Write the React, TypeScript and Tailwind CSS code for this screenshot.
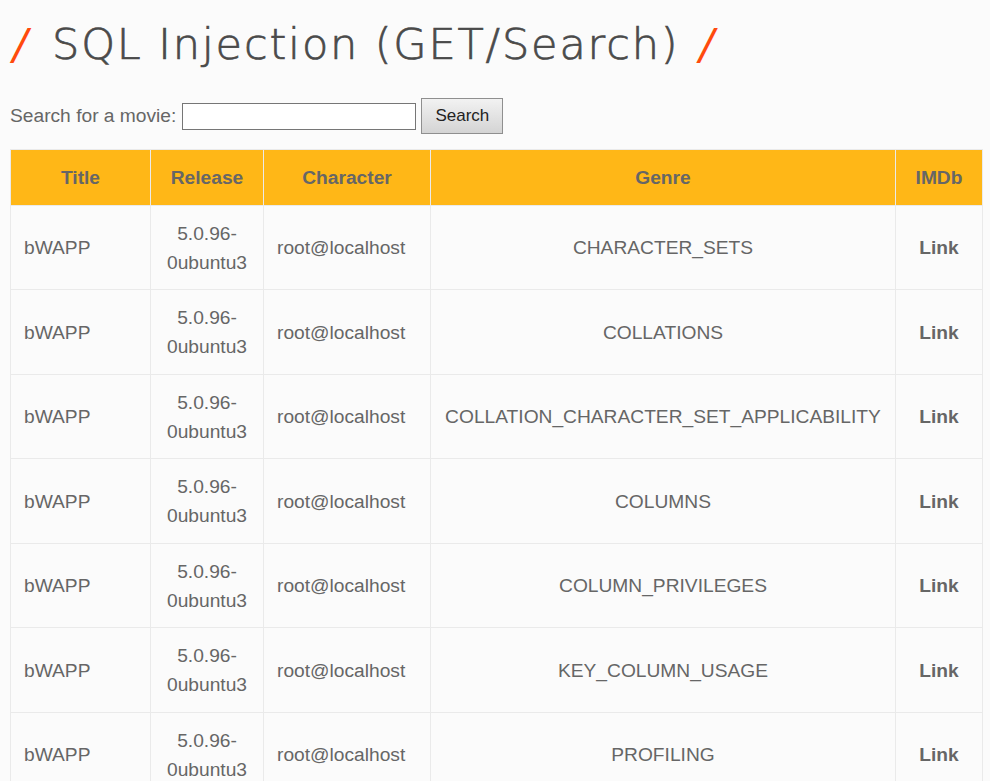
const rows = [
  'CHARACTER_SETS',
  'COLLATIONS',
  'COLLATION_CHARACTER_SET_APPLICABILITY',
  'COLUMNS',
  'COLUMN_PRIVILEGES',
  'KEY_COLUMN_USAGE',
  'PROFILING',
  'ROUTINES',
];

const headers = ['Title', 'Release', 'Character', 'Genre', 'IMDb'];

export default function App() {
  return (
    <div className="h-[781px] overflow-hidden bg-[#fbfbfb] pl-[10px] font-['Liberation_Sans',Arial,sans-serif] text-[19.2px] leading-[28.75px] text-[#666666]">
      <h1 className="flex h-[87px] items-center pt-[2px] font-['DejaVu_Sans',sans-serif] text-[43px] font-extralight leading-none tracking-[1.85px] text-[#4a4a4a] [-webkit-text-stroke:0.7px_#4a4a4a]">
        <span className="ml-[3px] w-[39px] font-normal italic text-[#ff4a0d] [-webkit-text-stroke:0]">/</span>
        <span>SQL Injection (GET/Search)</span>
        <span className="ml-[20px] font-normal italic text-[#ff4a0d] [-webkit-text-stroke:0]">/</span>
      </h1>

      <form className="mt-[11px] flex h-[36px] items-center">
        <label htmlFor="title">Search for a movie:</label>
        <input
          id="title"
          type="text"
          className="ml-[6px] h-[27px] w-[234px] border border-[#767676] bg-white"
        />
        <button
          type="button"
          className="ml-[5px] h-[36px] w-[82px] border border-[#8f8f8f] bg-linear-to-b from-[#f2f2f2] to-[#d4d4d4] text-[17px] text-[#222222]"
        >
          Search
        </button>
      </form>

      <table className="mt-[15px] w-[972px] table-fixed border-collapse">
        <colgroup>
          <col className="w-[140px]" />
          <col className="w-[113px]" />
          <col className="w-[167px]" />
          <col className="w-[465px]" />
          <col className="w-[87px]" />
        </colgroup>
        <thead>
          <tr className="bg-[#ffb717]">
            {headers.map((header) => (
              <th
                key={header}
                className="border border-[#eaeaea] px-[13px] pb-[12px] pt-[14px] text-center font-bold text-[#666666]"
              >
                {header}
              </th>
            ))}
          </tr>
        </thead>
        <tbody>
          {rows.map((genre) => (
            <tr key={genre}>
              <td className="border border-[#eaeaea] px-[13px] pb-[12px] pt-[14px]">bWAPP</td>
              <td className="border border-[#eaeaea] px-[13px] pb-[12px] pt-[14px] text-center">5.0.96-0ubuntu3</td>
              <td className="border border-[#eaeaea] px-[13px] pb-[12px] pt-[14px]">root@localhost</td>
              <td className="border border-[#eaeaea] px-[13px] pb-[12px] pt-[14px] text-center">{genre}</td>
              <td className="border border-[#eaeaea] px-[13px] pb-[12px] pt-[14px] text-center font-bold">Link</td>
            </tr>
          ))}
        </tbody>
      </table>
    </div>
  );
}
